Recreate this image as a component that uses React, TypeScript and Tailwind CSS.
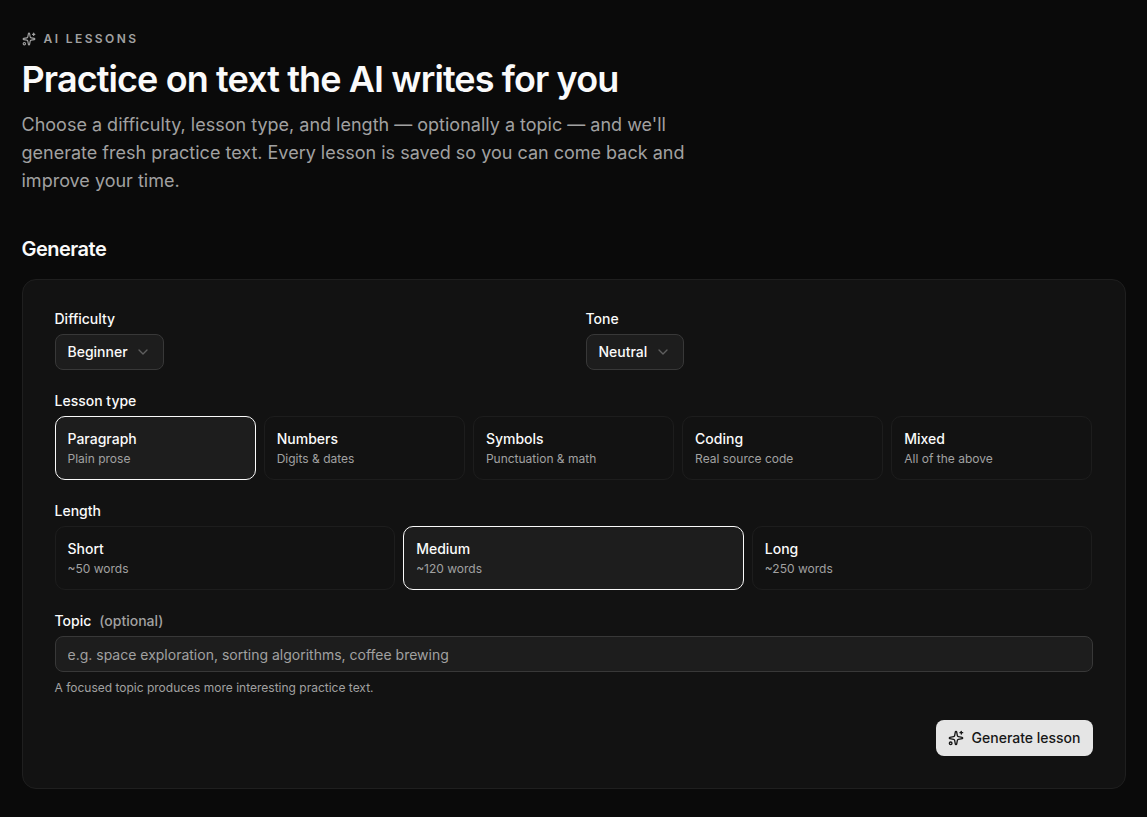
import React, { useState } from 'react';
import clsx from 'clsx';
import { ChevronDown } from 'lucide-react';

type Option = {
  title: string;
  hint: string;
};

const lessonTypes: Option[] = [
  { title: 'Paragraph', hint: 'Plain prose' },
  { title: 'Numbers', hint: 'Digits & dates' },
  { title: 'Symbols', hint: 'Punctuation & math' },
  { title: 'Coding', hint: 'Real source code' },
  { title: 'Mixed', hint: 'All of the above' },
];

const lengths: Option[] = [
  { title: 'Short', hint: '~50 words' },
  { title: 'Medium', hint: '~120 words' },
  { title: 'Long', hint: '~250 words' },
];

function SparklesIcon({ className }: { className?: string }) {
  return (
    <svg
      xmlns="http://www.w3.org/2000/svg"
      viewBox="0 0 24 24"
      fill="none"
      stroke="currentColor"
      strokeWidth={2}
      strokeLinecap="round"
      strokeLinejoin="round"
      className={className}
    >
      <path d="M11.017 2.814a1 1 0 0 1 1.966 0l1.051 5.558a2 2 0 0 0 1.594 1.594l5.558 1.051a1 1 0 0 1 0 1.966l-5.558 1.051a2 2 0 0 0-1.594 1.594l-1.051 5.558a1 1 0 0 1-1.966 0l-1.051-5.558a2 2 0 0 0-1.594-1.594l-5.558-1.051a1 1 0 0 1 0-1.966l5.558-1.051a2 2 0 0 0 1.594-1.594z" />
      <path d="M20 2v4" />
      <path d="M22 4h-4" />
      <circle cx="4" cy="20" r="2" />
    </svg>
  );
}

function Select({ label, value }: { label: string; value: string }) {
  return (
    <div className="flex flex-col items-start gap-2">
      <span className="text-sm leading-[14px] font-medium">{label}</span>
      <button
        type="button"
        className="flex h-9 items-center gap-[7.5px] rounded-lg border border-[#383838] bg-[#1d1d1d] px-3 text-sm font-medium"
      >
        {value}
        <ChevronDown className="size-4 text-[#5f5f5f]" />
      </button>
    </div>
  );
}

function OptionCard({ option, selected, onSelect }: { option: Option; selected: boolean; onSelect: () => void }) {
  return (
    <button
      type="button"
      onClick={onSelect}
      className={clsx(
        'flex h-16 flex-col items-start justify-center rounded-[10px] border px-3 text-left',
        selected ? 'border-[#fafafa] bg-[#1d1d1d]' : 'border-[#1d1d1d]'
      )}
    >
      <span className="text-sm font-medium">{option.title}</span>
      <span className="mt-0.5 text-xs leading-4 text-[#a1a1a1]">{option.hint}</span>
    </button>
  );
}

export default function App() {
  const [lessonType, setLessonType] = useState('Paragraph');
  const [length, setLength] = useState('Medium');

  return (
    <main className="min-h-screen bg-[#0a0a0a] px-[21.5px] pt-[31px] pb-7 font-['Inter',sans-serif] text-[#fafafa]">
      <header className="max-w-[672px]">
        {/* Eyebrow */}
        <div className="flex items-center gap-2 text-[#a1a1a1]">
          <SparklesIcon className="size-3.5" />
          <span className="text-xs leading-4 font-semibold tracking-[0.2em] uppercase">AI Lessons</span>
        </div>
        <h1 className="mt-3 text-4xl font-semibold tracking-tight">Practice on text the AI writes for you</h1>
        <p className="mt-3 text-lg text-[#a1a1a1]">
          Choose a difficulty, lesson type, and length — optionally a topic — and we'll generate fresh practice text.
          Every lesson is saved so you can come back and improve your time.
        </p>
      </header>

      <section className="mt-10">
        <h2 className="text-xl font-semibold tracking-tight">Generate</h2>

        <div className="mt-4 flex flex-col gap-6 rounded-[14px] border border-[#1f1f1f] bg-[#121212] p-8">
          <div className="grid grid-cols-2 gap-6">
            <Select label="Difficulty" value="Beginner" />
            <Select label="Tone" value="Neutral" />
          </div>

          <div className="flex flex-col gap-2">
            <span className="text-sm leading-[14px] font-medium">Lesson type</span>
            <div className="grid grid-cols-5 gap-2">
              {lessonTypes.map((option) => (
                <OptionCard
                  key={option.title}
                  option={option}
                  selected={option.title === lessonType}
                  onSelect={() => setLessonType(option.title)}
                />
              ))}
            </div>
          </div>

          <div className="flex flex-col gap-2">
            <span className="text-sm leading-[14px] font-medium">Length</span>
            <div className="grid grid-cols-3 gap-2">
              {lengths.map((option) => (
                <OptionCard
                  key={option.title}
                  option={option}
                  selected={option.title === length}
                  onSelect={() => setLength(option.title)}
                />
              ))}
            </div>
          </div>

          <div className="flex flex-col gap-2">
            <label htmlFor="topic" className="flex gap-2 text-sm leading-[14px] font-medium">
              Topic <span className="text-[#a1a1a1]">(optional)</span>
            </label>
            <input
              id="topic"
              placeholder="e.g. space exploration, sorting algorithms, coffee brewing"
              className="h-9 rounded-lg border border-[#383838] bg-[#1d1d1d] px-3 text-sm outline-none placeholder:text-[#a1a1a1]"
            />
            <p className="text-xs leading-4 text-[#a1a1a1]">A focused topic produces more interesting practice text.</p>
          </div>

          <div className="flex justify-end">
            <button
              type="button"
              className="flex h-9 items-center gap-2 rounded-lg bg-[#e5e5e5] px-3 text-sm font-medium text-[#171717]"
            >
              <SparklesIcon className="size-4" />
              Generate lesson
            </button>
          </div>
        </div>
      </section>
    </main>
  );
}
